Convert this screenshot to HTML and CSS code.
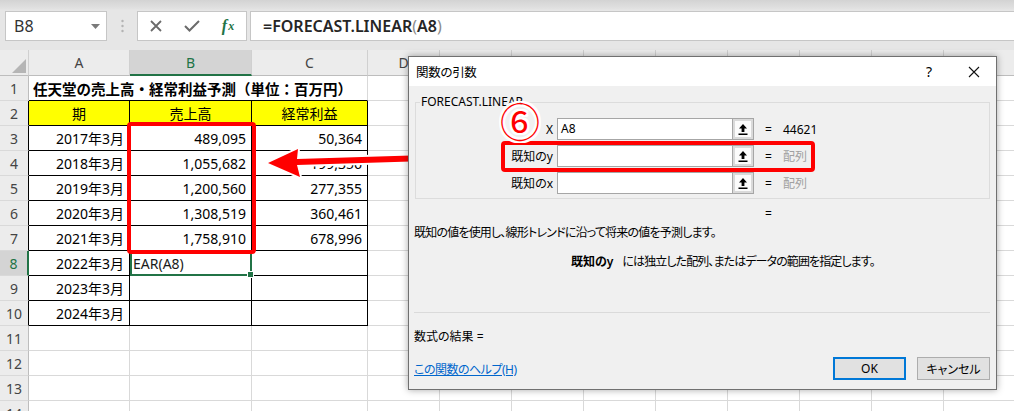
FILE: index.html
```html
<!DOCTYPE html>
<html>
  <head>
    <meta charset="utf-8" />
    <link rel="stylesheet" href="styles.css">
  </head>
  <body>
    <div class="app">
      <!-- formula bar -->
      <div class="top">
        <div class="fbar">
          <div class="namebox">
            <span>B8</span>
            <svg width="9" height="5" viewBox="0 0 9 5"><path d="M0 0h9L4.5 5z" fill="#7a7a7a"/></svg>
          </div>
          <div class="grip">
            <svg width="3" height="14" viewBox="0 0 3 14"><circle cx="1.5" cy="2" r="1.2" fill="#b3b3b3"/><circle cx="1.5" cy="7" r="1.2" fill="#b3b3b3"/><circle cx="1.5" cy="12" r="1.2" fill="#b3b3b3"/></svg>
          </div>
          <div class="fbtns">
            <span class="fbtn"><svg width="12" height="12" viewBox="0 0 12 12"><path d="M1 1l10 10M11 1L1 11" stroke="#6b6b6b" stroke-width="1.8"/></svg></span>
            <span class="fbtn"><svg width="16" height="12" viewBox="0 0 16 12"><path d="M1 6l4.5 4.5L15 1" fill="none" stroke="#6b6b6b" stroke-width="2"/></svg></span>
            <span class="fbtn fx"><i>f</i><i class="sx">x</i></span>
          </div>
          <div class="finput">=FORECAST.LINEAR<span class="paren">(</span>A8<span class="paren">)</span></div>
        </div>
      </div>

      <!-- grid -->
      <div class="sheet">
        <div class="row head">
          <div class="rh corner"><svg width="14" height="14" viewBox="0 0 14 14"><path d="M14 0v14H0z" fill="#b5b5b5"/></svg></div>
          <div>A</div>
          <div class="csel">B</div>
          <div>C</div>
          <!-- only D shows; the rest sits under the dialog -->
          <div class="hrest"><span>D</span><span></span><span></span><span></span><span></span><span></span><span></span><span></span><span></span></div>
        </div>
        <div class="row">
          <div class="rh">1</div>
          <div class="title">任天堂の売上高・経常利益予測（単位：百万円）</div>
          <div class="rest"></div>
        </div>
        <div class="row">
          <div class="rh tb">2</div>
          <div class="t y">期</div>
          <div class="t y">売上高</div>
          <div class="t y">経常利益</div>
          <div class="rest"></div>
        </div>
        <div class="row">
          <div class="rh tb">3</div>
          <div class="t r">2017年3月</div>
          <div class="t r">489,095</div>
          <div class="t r">50,364</div>
          <div class="rest"></div>
        </div>
        <div class="row">
          <div class="rh tb">4</div>
          <div class="t r">2018年3月</div>
          <div class="t r">1,055,682</div>
          <div class="t r">199,356</div>
          <div class="rest"></div>
        </div>
        <div class="row">
          <div class="rh tb">5</div>
          <div class="t r">2019年3月</div>
          <div class="t r">1,200,560</div>
          <div class="t r">277,355</div>
          <div class="rest"></div>
        </div>
        <div class="row">
          <div class="rh tb">6</div>
          <div class="t r">2020年3月</div>
          <div class="t r">1,308,519</div>
          <div class="t r">360,461</div>
          <div class="rest"></div>
        </div>
        <div class="row">
          <div class="rh tb">7</div>
          <div class="t r">2021年3月</div>
          <div class="t r">1,758,910</div>
          <div class="t r">678,996</div>
          <div class="rest"></div>
        </div>
        <div class="row">
          <div class="rh rsel">8</div>
          <div class="t r">2022年3月</div>
          <div class="t active">EAR(A8)</div>
          <div class="t"></div>
          <div class="rest"></div>
        </div>
        <div class="row">
          <div class="rh tb">9</div>
          <div class="t r">2023年3月</div>
          <div class="t"></div>
          <div class="t"></div>
          <div class="rest"></div>
        </div>
        <div class="row">
          <div class="rh tb">10</div>
          <div class="t r">2024年3月</div>
          <div class="t"></div>
          <div class="t"></div>
          <div class="rest"></div>
        </div>
        <div class="row">
          <div class="rh">11</div><div></div><div></div><div></div><div class="rest"></div>
        </div>
        <div class="row">
          <div class="rh">12</div><div></div><div></div><div></div><div class="rest"></div>
        </div>
        <div class="row">
          <div class="rh">13</div><div></div><div></div><div></div><div class="rest"></div>
        </div>
        <div class="row">
          <div class="rh">14</div><div></div><div></div><div></div><div class="rest"></div>
        </div>
      </div>

      <!-- callouts on the sheet -->
      <div class="mark-range"></div>
      <svg class="arrow" width="240" height="44" viewBox="262 142 240 44">
        <polygon points="492,153 297,159 298,149 268,163 300,177 297,165 492,159" fill="#ff0000" stroke="#fff" stroke-width="4" stroke-linejoin="round" paint-order="stroke"/>
      </svg>

      <!-- function arguments dialog -->
      <div class="dialog">
        <div class="dlg-title">
          <span class="dlg-name">関数の引数</span>
          <span class="dlg-help">?</span>
          <svg class="dlg-close" width="12" height="12" viewBox="0 0 12 12"><path d="M1 1l10 10M11 1L1 11" stroke="#111" stroke-width="1.1"/></svg>
        </div>
        <div class="group">
          <div class="legend">FORECAST.LINEAR</div>
          <div class="arg">
            <span class="arg-label">X</span>
            <span class="arg-input">A8</span>
            <span class="collapse"><span><svg width="10" height="12" viewBox="0 0 10 12"><path d="M5 1L1 5.5h2.6V9h2.8V5.5H9z M0.5 10.5h9v1.5h-9z" fill="#000"/></svg></span></span>
            <span class="arg-eq">=</span>
            <span class="arg-val">44621</span>
          </div>
          <div class="arg">
            <span class="arg-label">既知のy</span>
            <span class="arg-input"></span>
            <span class="collapse"><span><svg width="10" height="12" viewBox="0 0 10 12"><path d="M5 1L1 5.5h2.6V9h2.8V5.5H9z M0.5 10.5h9v1.5h-9z" fill="#000"/></svg></span></span>
            <span class="arg-eq">=</span>
            <span class="arg-val dim">配列</span>
          </div>
          <div class="arg">
            <span class="arg-label">既知のx</span>
            <span class="arg-input"></span>
            <span class="collapse"><span><svg width="10" height="12" viewBox="0 0 10 12"><path d="M5 1L1 5.5h2.6V9h2.8V5.5H9z M0.5 10.5h9v1.5h-9z" fill="#000"/></svg></span></span>
            <span class="arg-eq">=</span>
            <span class="arg-val dim">配列</span>
          </div>
        </div>
        <div class="fn-eq">=</div>
        <div class="fn-desc">既知の値を使用し、線形トレンドに沿って将来の値を予測します。</div>
        <div class="arg-desc"><b>既知のy</b><span>には独立した配列、またはデータの範囲を指定します。</span></div>
        <div class="sep"></div>
        <div class="fn-result">数式の結果 =</div>
        <div class="dlg-foot">
          <a href="#" class="help-link">この関数のヘルプ(H)</a>
          <span class="btn ok">OK</span>
          <span class="btn">キャンセル</span>
        </div>
      </div>

      <div class="mark-arg"></div>
      <div class="step">⑥</div>
    </div>
  </body>
</html>
```

FILE: styles.css
```css
body {
  margin: 0;
}

.app {
  position: relative;
  width: 1014px;
  height: 411px;
  overflow: hidden;
  background: #ffffff;
  font-family: "Noto Sans", "Noto Sans CJK JP", sans-serif;
}

/* formula bar */
.top {
  height: 50px;
  box-sizing: border-box;
  padding-top: 11px;
  background: linear-gradient(#d3d3d3 0px, #e2e2e2 9px, #e6e6e6 10px);
}

.fbar {
  display: flex;
  height: 30px;
  padding-left: 5px;
}

.namebox {
  width: 102px;
  box-sizing: border-box;
  background: #fff;
  border: 1px solid #c6c6c6;
  display: flex;
  align-items: center;
  justify-content: space-between;
  padding: 0 6px 0 8px;
  font-size: 16px;
  color: #333;
}

.grip {
  width: 30px;
  display: flex;
  align-items: center;
  justify-content: center;
}

.fbtns {
  width: 110px;
  box-sizing: border-box;
  background: #fff;
  border: 1px solid #c6c6c6;
  display: flex;
  align-items: center;
}

.fbtn {
  width: 36px;
  display: flex;
  justify-content: center;
  align-items: center;
}

.fx {
  font-family: "Liberation Serif", serif;
  color: #217346;
  font-size: 16px;
  font-weight: bold;
}

.fx .sx {
  font-size: 12px;
  margin-left: 1px;
}

.finput {
  flex: 1;
  margin-left: 3px;
  background: #fff;
  border: 1px solid #c6c6c6;
  border-right: none;
  padding-left: 12px;
  display: flex;
  align-items: center;
  font-size: 16px;
  font-weight: 600;
  color: #262626;
}

.finput .paren {
  color: #8c8c8c;
  font-weight: 400;
}

/* sheet grid */
.sheet {
  font-size: 14px;
  color: #000;
}

.row {
  display: grid;
  grid-template-columns: 29px 101px 122px 116px 1fr;
  height: 25px;
}

.row > div {
  box-sizing: border-box;
  border-right: 1px solid #d9d9d9;
  border-bottom: 1px solid #d9d9d9;
  display: flex;
  align-items: center;
  padding: 0 5px;
  white-space: nowrap;
  overflow: hidden;
}

.row > .rh {
  justify-content: center;
  padding: 0;
  background: #ececec;
  border-right-color: #bdbdbd;
  color: #444;
}

.row > .rh.tb {
  border-right-color: #000;
}

.row > .rsel {
  background: #d4d4d4;
  color: #217346;
  border-right: 2px solid #217346;
}

.head {
  height: 26px;
}

.head > div {
  background: #ececec;
  justify-content: center;
  color: #444;
  border-bottom-color: #bdbdbd !important;
  border-right-color: #d0d0d0 !important;
}

.row > .corner {
  align-items: flex-end;
  justify-content: flex-end;
  padding: 0 2px 2px 0;
}

.head > .csel {
  background: #d4d4d4;
  color: #217346;
  border-bottom: 2px solid #217346 !important;
}

.head > .hrest {
  padding: 0;
  justify-content: flex-start;
  border-right: none;
}

.hrest span {
  flex: none;
  width: 72px;
  height: 100%;
  box-sizing: border-box;
  border-right: 1px solid #d0d0d0;
  display: flex;
  align-items: center;
  justify-content: center;
}

.row > .rest {
  padding: 0;
  border-right: none;
  background: repeating-linear-gradient(90deg, transparent 0 71px, #d9d9d9 71px 72px);
}

.row > .title {
  grid-column: span 3;
  font-weight: bold;
  font-size: 14.5px;
  padding-left: 4px;
  border-bottom-color: #000;
}

.row > .t {
  border-right-color: #000;
  border-bottom-color: #000;
}

.row > .y {
  background: #ffff00;
  justify-content: center;
}

.row > .r {
  justify-content: flex-end;
}

.row > .active {
  position: relative;
  z-index: 1;
  overflow: visible;
  padding-left: 3px;
  color: #1a1a1a;
  outline: 2px solid #217346;
  outline-offset: -2px;
}

.active::after {
  content: "";
  position: absolute;
  right: -3px;
  bottom: -3px;
  width: 5px;
  height: 5px;
  background: #217346;
  border: 1px solid #fff;
}

/* red annotations */
.mark-range {
  position: absolute;
  left: 127px;
  top: 122px;
  width: 129px;
  height: 132px;
  box-sizing: border-box;
  border: 4px solid #ff0000;
  border-radius: 4px;
  z-index: 2;
}

.arrow {
  position: absolute;
  left: 262px;
  top: 142px;
  z-index: 3;
}

.mark-arg {
  position: absolute;
  left: 501px;
  top: 141px;
  width: 314px;
  height: 31px;
  box-sizing: border-box;
  border: 4px solid #ff0000;
  border-radius: 4px;
  z-index: 5;
}

.step {
  position: absolute;
  left: 500px;
  top: 100px;
  font-family: "Noto Sans CJK JP", sans-serif;
  font-size: 40px;
  line-height: 40px;
  color: #ff0000;
  z-index: 6;
  text-shadow: 2px 0 0 #fff, -2px 0 0 #fff, 0 2px 0 #fff, 0 -2px 0 #fff,
    2px 2px 0 #fff, -2px -2px 0 #fff, 2px -2px 0 #fff, -2px 2px 0 #fff;
}

/* dialog */
.dialog {
  position: absolute;
  left: 408px;
  top: 56px;
  width: 589px;
  height: 334px;
  box-sizing: border-box;
  background: #f0f0f0;
  border: 1px solid #707070;
  box-shadow: 0 0 7px rgba(0, 0, 0, 0.35);
  z-index: 4;
  font-family: "Noto Sans", "Noto Sans CJK JP", sans-serif;
  font-feature-settings: "palt";
  font-size: 12px;
  color: #000;
}

.dlg-title {
  height: 29px;
  background: #fff;
  display: flex;
  align-items: center;
  padding-left: 7px;
}

.dlg-name {
  flex: 1;
  font-size: 12.5px;
  letter-spacing: -0.3px;
}

.dlg-help {
  font-size: 14px;
  margin-right: 36px;
}

.dlg-close {
  margin-right: 16px;
}

.group {
  margin: 16px 6px 0 6px;
  border: 1px solid #dcdcdc;
  padding: 0 0 5px 0;
  height: 97px;
  box-sizing: border-box;
}

.legend {
  width: max-content;
  height: 16px;
  margin: -9px 0 0 4px;
  padding: 0 1px;
  line-height: 16px;
  background: #f0f0f0;
}

.arg {
  display: flex;
  align-items: center;
  height: 22px;
  margin-top: 5px;
}

.legend + .arg {
  margin-top: 8px;
}

.arg-label {
  width: 137px;
  text-align: right;
  margin-right: 4px;
}

.arg-input {
  width: 176px;
  height: 22px;
  box-sizing: border-box;
  background: #fff;
  border: 1px solid #a6a6a6;
  padding-left: 3px;
  line-height: 20px;
}

.collapse {
  width: 21px;
  height: 22px;
  box-sizing: border-box;
  border: 1px solid #a6a6a6;
  border-left: none;
  background: #dadada;
  padding: 2px;
  display: flex;
}

.collapse span {
  flex: 1;
  background: #fbfbfb;
  display: flex;
  align-items: center;
  justify-content: center;
}

.arg-eq {
  margin-left: 11px;
  width: 18px;
}

.arg-val.dim {
  color: #a0a0a0;
}

.fn-eq {
  margin-top: 8px;
  padding-left: 356px;
  line-height: 14px;
}

.fn-desc {
  margin-top: 4px;
  padding-left: 5px;
  line-height: 16px;
  letter-spacing: -0.8px;
}

.arg-desc {
  margin-top: 13px;
  padding-left: 162px;
  line-height: 16px;
  letter-spacing: -0.9px;
}

.arg-desc b {
  font-weight: 600;
  letter-spacing: 0;
  margin-right: 9px;
}

.sep {
  margin: 42px 6px 0 5px;
  border-top: 1px solid #dadada;
}

.fn-result {
  margin-top: 16px;
  padding-left: 5px;
  line-height: 16px;
}

.dlg-foot {
  margin-top: 12px;
  display: flex;
  align-items: center;
  padding: 0 6px 0 5px;
}

.help-link {
  flex: 1;
  color: #0066cc;
  text-decoration: underline;
  letter-spacing: -0.5px;
}

.btn {
  width: 73px;
  height: 23px;
  box-sizing: border-box;
  background: #e1e1e1;
  border: 1px solid #adadad;
  display: flex;
  align-items: center;
  justify-content: center;
  margin-left: 11px;
}

.btn.ok {
  border: 2px solid #0078d7;
}
```
